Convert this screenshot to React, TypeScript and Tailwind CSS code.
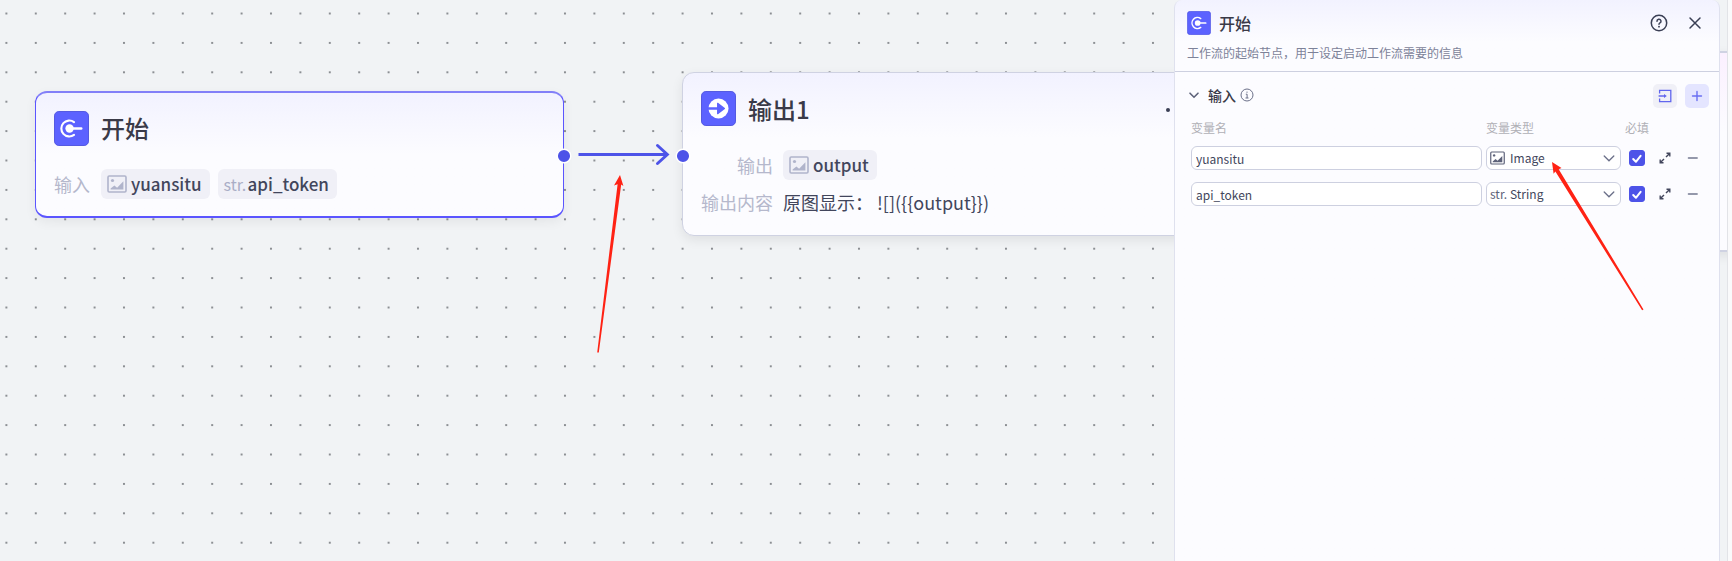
import { useState } from 'react';
import type { ReactNode } from 'react';

interface Variable {
  name: string;
  type: 'Image' | 'String';
  required: boolean;
}

const INITIAL: Variable[] = [
  { name: 'yuansitu', type: 'Image', required: true },
  { name: 'api_token', type: 'String', required: true },
];

function StartIcon({ className }: { className: string }) {
  return (
    <svg viewBox="0 0 36 36" className={className} aria-hidden="true">
      <rect x="0.5" y="0.5" width="35" height="35" rx="4.5" fill="#5c62ff" stroke="#5257e0" />
      <path d="M20.6 11.4A8.2 8.2 0 1 0 20.6 24.6" fill="none" stroke="#fff" strokeWidth="2.2" strokeLinecap="round" />
      <circle cx="16" cy="18" r="4.3" fill="#fff" />
      <path d="M16 18h12" stroke="#fff" strokeWidth="2.6" strokeLinecap="round" />
    </svg>
  );
}

function OutputIcon({ className }: { className: string }) {
  return (
    <svg viewBox="0 0 36 36" className={className} aria-hidden="true">
      <rect x="0.5" y="0.5" width="35" height="35" rx="4.5" fill="#5c62ff" stroke="#5257e0" />
      <circle cx="18" cy="18" r="10.3" fill="#fff" />
      <path d="M7 16.7h9.5v-4.1a.6.6 0 0 1 1-.4l7 5.3a.7.7 0 0 1 0 1l-7 5.3a.6.6 0 0 1-1-.4v-4.1H7z" fill="#5c62ff" />
    </svg>
  );
}

function ImageIcon({ className }: { className: string }) {
  return (
    <svg viewBox="0 0 20 18" className={className} aria-hidden="true">
      <rect x="1" y="1" width="18" height="16" rx="1.2" fill="none" stroke="currentColor" strokeWidth="1.6" />
      <circle cx="5.5" cy="5.5" r="1.6" fill="currentColor" />
      <path d="M3.6 14.6v-1l3.8-3.2 2.7 2.4 6.3-6.6v8.4z" fill="currentColor" />
    </svg>
  );
}

function Chip({ kind, children }: { kind: 'image' | 'str'; children: ReactNode }) {
  return (
    <span className="flex h-[30px] items-center gap-1 rounded-md bg-[#f0f0f7] pr-2 pl-[6px] text-[17px] font-medium text-[#42465c]">
      {kind === 'image' ? (
        <ImageIcon className="h-[18px] w-5 text-[#b0b4cb]" />
      ) : (
        <span className="w-5 text-base font-normal text-[#a9adc6]">str.</span>
      )}
      {children}
    </span>
  );
}

function Dots() {
  return (
    <svg className="absolute inset-0 h-full w-full" aria-hidden="true">
      <defs>
        <pattern id="dots" x="-8.3" y="-1.2" width="29.4" height="29.4" patternUnits="userSpaceOnUse">
          <circle cx="14.7" cy="14.7" r="1.1" fill="#76797e" />
        </pattern>
      </defs>
      <rect width="100%" height="100%" fill="url(#dots)" />
    </svg>
  );
}

function Canvas() {
  return (
    <section className="absolute inset-0 right-1 overflow-hidden border-r border-[#e2e3e7] bg-[#f1f3f5]">
      <Dots />

      {/* start node */}
      <article className="absolute top-[91px] left-[35px] w-[529px] rounded-xl border border-y-2 border-[#5b55ff] border-t-[#827ff8] bg-[#fcfcff] bg-linear-to-b from-[#f2f2ff] to-[#fcfcff] to-50% px-[18px] pt-[18px] pb-[17px] shadow-[0_4px_12px_rgba(0,0,0,0.06)]">
        <header className="flex items-start gap-3">
          <StartIcon className="size-[35px]" />
          <h2 className="text-2xl leading-[34px] font-medium text-[#3a3a48]">开始</h2>
        </header>
        <div className="mt-[23px] flex items-center">
          <span className="w-[47px] text-lg leading-[30px] text-[#b5b8cc]">输入</span>
          <div className="flex gap-2">
            <Chip kind="image">yuansitu</Chip>
            <Chip kind="str">api_token</Chip>
          </div>
        </div>
      </article>

      {/* output node */}
      <article className="absolute top-[72px] left-[682px] w-[529px] rounded-xl border border-[#cfd2e2] bg-[#fcfcff] bg-linear-to-b from-[#f2f2ff] to-[#fcfcff] to-40% px-[18px] pt-[18px] pb-[18px] shadow-[0_4px_12px_rgba(0,0,0,0.08)]">
        <header className="flex items-center gap-3">
          <OutputIcon className="size-[35px]" />
          <h2 className="flex-1 text-2xl leading-[34px] font-medium text-[#3a3a48]">输出1</h2>
          <svg viewBox="0 0 28 6" className="h-[6px] w-7" fill="#3a3f55" aria-hidden="true">
            <circle cx="4" cy="4" r="2" />
            <circle cx="13" cy="4" r="2" />
            <circle cx="22" cy="4" r="2" />
          </svg>
        </header>
        <dl className="mt-6 grid grid-cols-[72px_1fr] gap-x-[10px] gap-y-[7px] text-lg leading-[30px]">
          <dt className="text-right text-[#b5b8cc]">输出</dt>
          <dd className="flex">
            <Chip kind="image">output</Chip>
          </dd>
          <dt className="text-right whitespace-nowrap text-[#b5b8cc]">输出内容</dt>
          <dd className="text-[#42465c]">原图显示： {'![]({{output}})'}</dd>
        </dl>
      </article>

      {/* next node, mostly hidden behind the panel */}
      <article className="absolute top-[51px] -right-[500px] h-[201px] w-[529px] rounded-xl border border-y-2 border-[#cfd2e2] bg-linear-to-b from-[#fbf0ff] to-[#fcfcff] to-40% shadow-[0_4px_12px_rgba(0,0,0,0.08)]" />

      {/* edge */}
      <svg className="absolute top-[136px] left-[550px] h-10 w-[150px]" viewBox="0 0 150 40" fill="none" aria-hidden="true">
        <path d="M28.5 18.5H117" stroke="#4d53e8" strokeWidth="3" />
        <path d="M107.5 9.5l9.8 9-9.8 9" stroke="#4d53e8" strokeWidth="3" strokeLinecap="round" />
        <circle cx="14" cy="20" r="6.8" fill="#4d53e8" stroke="#fff" strokeWidth="1.5" />
        <circle cx="133" cy="20" r="6.8" fill="#4d53e8" stroke="#fff" strokeWidth="1.5" />
      </svg>
    </section>
  );
}

interface RowProps {
  variable: Variable;
  onChange: (next: Variable) => void;
  onRemove: () => void;
}

function VariableRow({ variable, onChange, onRemove }: RowProps) {
  return (
    <div className="grid grid-cols-[1fr_135px_84px] items-center gap-1 text-xs text-[#42465c]">
      <input
        aria-label="变量名"
        value={variable.name}
        onChange={(e) => onChange({ ...variable, name: e.target.value })}
        className="h-6 min-w-0 rounded-md border border-[#cdd0e0] bg-white px-1 pt-px"
      />
      <div className="relative">
        <select
          aria-label="变量类型"
          value={variable.type}
          onChange={(e) => onChange({ ...variable, type: e.target.value as Variable['type'] })}
          className="block h-6 w-full appearance-none rounded-md border border-[#cdd0e0] bg-white pl-[23px]"
        >
          <option>Image</option>
          <option>String</option>
        </select>
        <span className="pointer-events-none absolute inset-y-0 left-1 flex items-center text-[#5d6279]">
          {variable.type === 'Image' ? <ImageIcon className="h-[14px] w-[15px]" /> : 'str.'}
        </span>
        <svg viewBox="0 0 12 12" className="pointer-events-none absolute top-[6px] right-[6px] size-3" fill="none" stroke="#6b7089" strokeWidth="1.3" strokeLinecap="round" aria-hidden="true">
          <path d="M1.2 4l4.8 4.8L10.8 4" />
        </svg>
      </div>
      <div className="flex items-center pl-1">
        <span className="relative size-4">
          <input
            type="checkbox"
            aria-label="必填"
            checked={variable.required}
            onChange={(e) => onChange({ ...variable, required: e.target.checked })}
            className="peer block size-4 appearance-none rounded-[3px] border border-[#4d53e8] checked:bg-[#4d53e8]"
          />
          <svg viewBox="0 0 16 16" className="pointer-events-none absolute inset-0 hidden size-4 peer-checked:block" fill="none" stroke="#fff" strokeWidth="2" strokeLinecap="round" strokeLinejoin="round" aria-hidden="true">
            <path d="M4.2 9l2.7 2.8 4.7-6" />
          </svg>
        </span>
        <button type="button" aria-label="展开" className="ml-[14px]">
          <svg viewBox="0 0 12 12" className="size-3" fill="none" stroke="#42465c" strokeWidth="1.4" aria-hidden="true">
            <path d="M7.5 1.2h3.3v3.3M10.6 1.4L7 5M1.2 7.5v3.3h3.3M1.4 10.6L5 7" />
          </svg>
        </button>
        <button type="button" aria-label="删除" onClick={onRemove} className="ml-4">
          <svg viewBox="0 0 12 12" className="size-3" fill="none" stroke="#9498ab" strokeWidth="1.8" strokeLinecap="round" aria-hidden="true">
            <path d="M1.6 6H10" />
          </svg>
        </button>
      </div>
    </div>
  );
}

function Panel() {
  const [variables, setVariables] = useState<Variable[]>(INITIAL);

  const update = (idx: number, next: Variable) =>
    setVariables(variables.map((v, i) => (i === idx ? next : v)));

  return (
    <aside className="relative w-[546px] rounded-t-lg border-x border-[#dfe1ee] bg-[#fcfcff] bg-linear-to-b from-[#f2f2ff] to-[#fcfcff] to-[42px]">
      <header className="border-b border-[#cdd0e0] px-3 pt-[11px] pb-[9px]">
        <div className="flex items-center">
          <StartIcon className="size-6" />
          <h1 className="ml-2 flex-1 text-base leading-6 font-medium text-[#3a3a48]">开始</h1>
          <button type="button" aria-label="帮助">
            <svg viewBox="0 0 18 18" className="size-[18px]" fill="none" stroke="#3a3f55" strokeWidth="1.5" strokeLinecap="round" aria-hidden="true">
              <circle cx="9" cy="9" r="7.7" />
              <path d="M7 7.3a2 2 0 1 1 3 1.6c-.7.4-1 .7-1 1.3" />
              <path d="M9 12.6v.1" strokeWidth="1.8" />
            </svg>
          </button>
          <button type="button" aria-label="关闭" className="mr-[5px] ml-5">
            <svg viewBox="0 0 14 14" className="size-[14px]" fill="none" stroke="#3a3f55" strokeWidth="1.5" strokeLinecap="round" aria-hidden="true">
              <path d="M2 2l10 10M12 2L2 12" />
            </svg>
          </button>
        </div>
        <p className="mt-[9px] text-xs leading-[18px] text-[#7d8299]">工作流的起始节点，用于设定启动工作流需要的信息</p>
      </header>

      <section className="pt-3 pr-[10px] pl-[13px]">
        <div className="flex items-start">
          <div className="flex items-center">
            <svg viewBox="0 0 12 12" className="size-3" fill="none" stroke="#5d6279" strokeWidth="1.6" strokeLinecap="round" aria-hidden="true">
              <path d="M2 4.2l4 4 4-4" />
            </svg>
            <h2 className="ml-2 text-sm leading-[22px] font-medium text-[#3a3a48]">输入</h2>
            <svg viewBox="0 0 14 14" className="ml-1 size-[14px]" fill="none" stroke="#6b7089" aria-hidden="true">
              <circle cx="7" cy="7" r="6" />
              <path d="M5.8 6.2H7.1V10M5.5 10h3M7 3.6v1.2" />
            </svg>
          </div>
          <div className="ml-auto flex gap-2">
            <button type="button" aria-label="导入" className="flex size-6 items-center justify-center rounded-[5px] bg-[#f0f0f7]">
              <svg viewBox="0 0 14 14" className="size-[14px]" fill="none" stroke="#6166ee" strokeWidth="1.3" aria-hidden="true">
                <path d="M1.6 4.6V1.4h11.2v11.2H1.6V9.4M.6 7h6.2" />
                <path d="M6 4.9L8.8 7 6 9.1z" fill="#6166ee" stroke="none" />
              </svg>
            </button>
            <button
              type="button"
              aria-label="新增"
              onClick={() => setVariables([...variables, { name: '', type: 'String', required: true }])}
              className="flex size-6 items-center justify-center rounded-[5px] bg-[#e4e5ff]"
            >
              <svg viewBox="0 0 12 12" className="size-3" fill="none" stroke="#6a6ff2" strokeWidth="1.4" strokeLinecap="round" aria-hidden="true">
                <path d="M6 1.5v9M1.5 6h9" />
              </svg>
            </button>
          </div>
        </div>

        <div className="mt-3 pl-[3px]">
          <div className="grid grid-cols-[1fr_135px_84px] gap-1 text-xs leading-4 text-[#b0b0b6]">
            <span>变量名</span>
            <span>变量类型</span>
            <span>必填</span>
          </div>
          <div className="mt-[10px] flex flex-col gap-3">
            {variables.map((v, i) => (
              <VariableRow
                key={i}
                variable={v}
                onChange={(next) => update(i, next)}
                onRemove={() => setVariables(variables.filter((_, j) => j !== i))}
              />
            ))}
          </div>
        </div>
      </section>
    </aside>
  );
}

/** Red arrows drawn over the editor */
function Annotations() {
  return (
    <>
      <svg className="pointer-events-none absolute top-[170px] left-[590px] h-[190px] w-10" viewBox="0 0 40 190" fill="#ff2214" aria-hidden="true">
        <path d="M30 5l3.4 11-2.2-1.5L8.8 182.5H7.2L27.6 14.2l-3.6 1.3z" />
      </svg>
      <svg className="pointer-events-none absolute top-[155px] right-[82px] h-40 w-[110px]" viewBox="0 0 110 160" fill="#ff2214" aria-hidden="true">
        <path d="M12 7l9.5 6-2.8 1.2 84.8 140.3-1.4.8L15.4 16.4l-1.8 2.4z" />
      </svg>
    </>
  );
}

export default function App() {
  return (
    <main className="relative flex min-h-screen justify-end overflow-hidden bg-[#fafafb] pr-3 font-['Noto_Sans_CJK_SC',sans-serif]">
      <Canvas />
      <Panel />
      <Annotations />
    </main>
  );
}
